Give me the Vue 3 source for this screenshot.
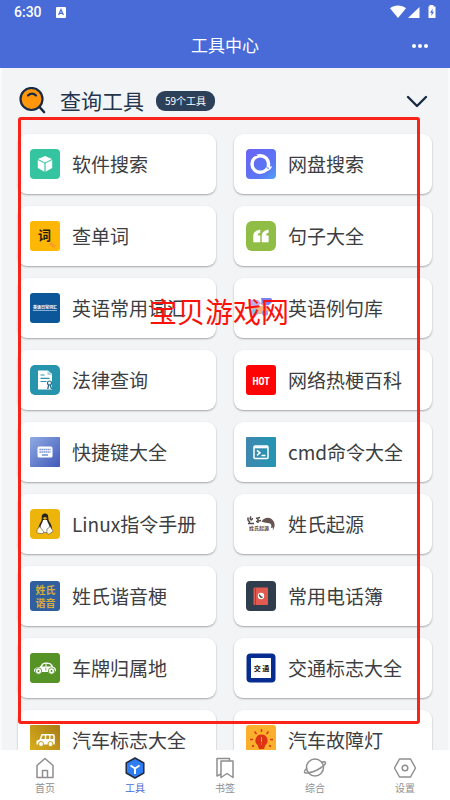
<script setup>
import { ref } from 'vue'

const open = ref(true)
const tools = [
  { id: 'box', name: '软件搜索' },
  { id: 'disk', name: '网盘搜索' },
  { id: 'word', name: '查单词' },
  { id: 'quote', name: '句子大全' },
  { id: 'vocab', name: '英语常用词汇' },
  { id: 'example', name: '英语例句库' },
  { id: 'law', name: '法律查询' },
  { id: 'hot', name: '网络热梗百科' },
  { id: 'keyboard', name: '快捷键大全' },
  { id: 'cmd', name: 'cmd命令大全' },
  { id: 'linux', name: 'Linux指令手册' },
  { id: 'origin', name: '姓氏起源' },
  { id: 'homophone', name: '姓氏谐音梗' },
  { id: 'phone', name: '常用电话簿' },
  { id: 'car', name: '车牌归属地' },
  { id: 'traffic', name: '交通标志大全' },
  { id: 'van', name: '汽车标志大全' },
  { id: 'lamp', name: '汽车故障灯' }
]
const tabs = [
  { id: 'home', name: '首页' },
  { id: 'tools', name: '工具' },
  { id: 'bookmark', name: '书签' },
  { id: 'planet', name: '综合' },
  { id: 'settings', name: '设置' }
]
</script>

<template>
  <div class="app">
    <header class="top">
      <div class="status">
        <span>6:30</span>
        <svg class="ime" width="10" height="11" viewBox="0 0 10 11">
          <rect width="10" height="11" rx="1" fill="#fff" />
          <path d="M2.6 8 5 2.6 7.4 8M3.5 6.3h3" fill="none" stroke="#486bd8" stroke-width="1.2" />
        </svg>
        <svg class="signals" width="46" height="14" viewBox="0 0 46 14" fill="#fff">
          <path d="M0 3.2C4.500-.3 11.500-.3 16 3.200L8 13z" />
          <path d="M29.500 2v11H18z" />
          <path d="M39.500 0h4v1.500H45.500V13h-7V1.500h1z" />
          <path d="M42.800 3.500 40 7.700h1.700L41.200 11 44 6.800h-1.700z" fill="#486bd8" />
        </svg>
      </div>
      <div class="title-row">
        <h1>工具中心</h1>
        <button class="more" type="button" aria-label="更多">
          <svg width="18" height="6" viewBox="0 0 18 6" fill="#fff">
            <circle cx="3" cy="3" r="2" /><circle cx="9" cy="3" r="2" /><circle cx="15" cy="3" r="2" />
          </svg>
        </button>
      </div>
    </header>

    <div class="stage">
      <main class="content">
        <div class="section-head">
          <svg class="lens" width="28" height="28" viewBox="0 0 28 28" fill="none" stroke="#172b45" stroke-width="2.200" stroke-linecap="round">
            <circle cx="12.500" cy="12" r="11" fill="#ff960b" />
            <path d="M9 8.500c2.300-2.600 5.700-2.600 8 0" />
            <path d="m20.500 20 4.500 5" stroke-width="2.600" />
          </svg>
          <h2>查询工具</h2>
          <span class="count">59个工具</span>
          <button class="toggle" type="button" aria-label="展开或收起" :aria-expanded="open" @click="open = !open">
            <svg width="22" height="14" viewBox="0 0 22 14" fill="none" stroke="#172b45" stroke-width="2.400" stroke-linecap="round" stroke-linejoin="round">
              <path d="m2 3 9 9 9-9" />
            </svg>
          </button>
        </div>

        <div v-if="open" class="grid">
          <a v-for="t in tools" :key="t.id" class="card" href="#">
            <svg class="icon" width="30" height="30" viewBox="0 0 30 30">
              <template v-if="t.id === 'box'">
                <rect width="30" height="30" rx="4" fill="#35c4a0" />
                <path d="m15 7 7 3-7 3.500L8 10z" fill="#fff" />
                <path d="m7.800 11 6.600 3.300v8.400l-6.600-3.700zM22.200 11l-6.600 3.300v8.400l6.600-3.700z" fill="#fff" />
              </template>
              <template v-else-if="t.id === 'disk'">
                <defs>
                  <linearGradient id="g-disk" x1="0" y1="0" x2="1" y2="1">
                    <stop offset="0" stop-color="#6a62f2" /><stop offset=".7" stop-color="#5a78f4" /><stop offset="1" stop-color="#52a6f6" />
                  </linearGradient>
                </defs>
                <rect width="30" height="30" rx="4" fill="url(#g-disk)" />
                <circle cx="14.300" cy="15" r="8.300" fill="none" stroke="#fff" stroke-width="3.400" />
                <path d="M22.500 14c.2 3 1 3.800 3.500 3.300-1 3.700-3.600 5-6.500 4.200z" fill="#fff" />
                <path d="M5.500 8.500c2-2 3.600-2.400 5.800-2" fill="none" stroke="#6668f3" stroke-width="1.200" />
                <path d="M20 17.300c.6 1.300 1.600 2 3 2" fill="none" stroke="#5a7cf4" stroke-width="1" />
              </template>
              <template v-else-if="t.id === 'word'">
                <rect width="30" height="30" rx="3" fill="#fdb704" />
                <path d="m20 22 5 4" stroke="#f99a2c" stroke-width="3" />
                <text x="14.500" y="19" class="glyph word">词</text>
              </template>
              <template v-else-if="t.id === 'quote'">
                <rect width="30" height="30" rx="6" fill="#8fbd45" />
                <path d="M14 9v2.500c-2 .5-2.500 1.500-2.400 3.200H14V21H7.600v-6C7.600 11.500 10 9.500 14 9zM22.300 9v2.500c-2 .5-2.500 1.500-2.400 3.200h2.400V21H16v-6c0-3.500 2.300-5.500 6.300-6z" fill="#fff" stroke="#fff" stroke-width=".6" stroke-linejoin="round" />
              </template>
              <template v-else-if="t.id === 'vocab'">
                <rect width="30" height="30" rx="3" fill="#0c5799" />
                <text x="15" y="16" class="glyph tiny">英语日常词汇</text>
                <path d="M3 17.500h24" stroke="#a9c6df" stroke-width=".8" />
              </template>
              <template v-else-if="t.id === 'example'">
                <path d="M4 7h8l3 3-3 3H6L3 10z" fill="#b9b1ef" />
                <path d="M15 5h10l2 3-4 4h-7z" fill="#7d7ff0" />
                <path d="M5 13h15l5 4-6 4H8z" fill="#f6b27d" />
                <circle cx="9" cy="19" r="3.500" fill="#83c2ec" />
                <circle cx="19" cy="20" r="3" fill="#9d91ee" />
                <path d="m15 10 7 5" stroke="#ee7da8" stroke-width="2" />
              </template>
              <template v-else-if="t.id === 'law'">
                <rect width="30" height="30" rx="5" fill="#2794ad" />
                <path d="M8 5.500h10L22 9v15.500H8z" fill="#fff" />
                <path d="M17.500 5.500V10H22" fill="#a7d4df" />
                <path d="M10.500 10h4M10.500 13.300h9M10.500 16.500h6" stroke="#2794ad" stroke-width="1.200" />
                <circle cx="19.500" cy="18" r="2" fill="#fff" stroke="#2a6d8c" stroke-width="1.200" />
                <path d="m18.700 20-1 4M20.300 20l1.200 4" stroke="#2a6d8c" stroke-width="1.300" />
              </template>
              <template v-else-if="t.id === 'hot'">
                <rect width="30" height="30" rx="3" fill="#fe0303" />
                <text x="15" y="20" class="glyph hot">HOT</text>
              </template>
              <template v-else-if="t.id === 'keyboard'">
                <defs>
                  <linearGradient id="g-key" x1="0" y1="0" x2="1" y2="1">
                    <stop offset="0" stop-color="#8fabe4" /><stop offset="1" stop-color="#4059b9" />
                  </linearGradient>
                </defs>
                <rect width="30" height="30" rx="1" fill="url(#g-key)" />
                <rect x="7.500" y="9.500" width="15" height="11" rx="1.500" fill="#fff" />
                <path d="M9.500 12.500h11M9.500 15h11" stroke="#5f7ecb" stroke-width="1.300" stroke-dasharray="1.300 .7" />
                <path d="M12 18h6" stroke="#5f7ecb" stroke-width="1.300" />
              </template>
              <template v-else-if="t.id === 'cmd'">
                <defs>
                  <linearGradient id="g-cmd" x1="0" y1="0" x2="1" y2="0">
                    <stop offset="0" stop-color="#4087af" /><stop offset="1" stop-color="#2296b1" />
                  </linearGradient>
                </defs>
                <rect width="30" height="30" rx="1" fill="url(#g-cmd)" />
                <rect x="8" y="9" width="14" height="12.500" rx="1" fill="none" stroke="#fff" stroke-width="1.500" />
                <path d="M8 10.300h14" stroke="#fff" stroke-width="2" />
                <path d="m11 13.300 3 2.500-3 2.500M15.500 18.500h4" fill="none" stroke="#fff" stroke-width="1.500" />
              </template>
              <template v-else-if="t.id === 'linux'">
                <rect width="30" height="30" rx="4" fill="#edb50b" />
                <path d="M15 4.500c-2.500 0-3.500 1.800-3.300 4.300.2 2.800-.6 3.600-1.900 6-1 1.900-1.300 3.500-1.500 5.500L13 24h5l4-4c0-2.500-.9-4.500-2-6.200-1.300-2-1.700-3-1.700-5.300 0-2.500-1-4-3.300-4z" fill="#262420" />
                <path d="M13 11h4c.3 2.500 3 5 2.800 9l-2.300 3.500h-5L10.200 19c.2-3.500 2.600-5 2.800-8z" fill="#fff" />
                <path d="m12.500 9 2.500-1 2.300 1-2.300 2z" fill="#eda91a" />
                <path d="M9.700 17.500 14 23c-.5 2-3 2-6.700.9-.8-.4-.3-1.700 0-3.500zM20.500 17.500 17 20c-.5 5 .5 5.500 2.500 4.800l3.500-2.300c.8-.8-.3-1.300-1-2z" fill="#fffbe8" stroke="#302d24" stroke-width=".5" />
              </template>
              <template v-else-if="t.id === 'origin'">
                <path d="M2 8.500v2.500l2 2.500M5 7.500c-2 3 1 5 1.500 1.500M2 14.500h6M10 9.500l4-1M10 12.500l5-1M12 9v5" stroke="#55494a" stroke-width="1.500" fill="none" />
                <path d="M15.500 12.500C19 7 25.500 8 28 13c1.300 3.300.4 6-1.300 8.500l.3-3-2.200.6c1-2.200.7-3.600-.8-4.600-2.700-.8-5.800-.5-8.500-2z" fill="#655453" />
                <text x="13" y="21" class="glyph seal">姓氏起源</text>
              </template>
              <template v-else-if="t.id === 'homophone'">
                <rect width="30" height="30" rx="3" fill="#305f9f" />
                <text x="15.500" y="13" class="glyph gold">姓氏</text>
                <text x="15.500" y="25.500" class="glyph gold">谐音</text>
              </template>
              <template v-else-if="t.id === 'phone'">
                <rect width="30" height="30" rx="4" fill="#303d4c" />
                <rect x="7.500" y="6.500" width="14.500" height="17.500" rx="1" fill="#e05a50" />
                <path d="M9.500 6.500V24" stroke="#9f4245" stroke-width="1" />
                <circle cx="15" cy="15" r="3.200" fill="#fff" />
                <path d="M13.600 13.500c0 1.500 1.200 2.900 2.900 2.900" fill="none" stroke="#333" stroke-width="1.200" />
              </template>
              <template v-else-if="t.id === 'car'">
                <rect width="30" height="30" rx="3" fill="#569326" />
                <path d="M4 17.500c0-2 3-3.500 6-3.700C11.500 11 13 9.500 16 9.500c4 0 5.500.8 7.500 4.500 2 .4 2.500 1.500 2.500 4l-1.500 1h-19C4.500 19 4 18.500 4 17.500z" fill="#fff" />
                <path d="M12 13.500c1-2 2-2.700 3.500-2.700v2.700zM16.500 10.800c2.500 0 4 .7 5 2.700h-5z" fill="#569326" />
                <path d="M15.800 14.500v3" stroke="#569326" stroke-width=".7" />
                <g fill="#fff" stroke="#569326" stroke-width=".8"><circle cx="8.500" cy="18" r="3.200" /><circle cx="21.500" cy="18" r="3.200" /></g>
                <g fill="#569326"><circle cx="8.500" cy="18" r="1" /><circle cx="21.500" cy="18" r="1" /></g>
              </template>
              <template v-else-if="t.id === 'traffic'">
                <rect x=".5" y=".5" width="29" height="29" rx="4" fill="#062c91" />
                <rect x="5" y="5" width="20" height="20" fill="#fff" />
                <text x="15.500" y="18" class="glyph road">交 通</text>
              </template>
              <template v-else-if="t.id === 'van'">
                <defs>
                  <linearGradient id="g-van" x1="0" y1="1" x2="1" y2="0">
                    <stop offset="0" stop-color="#ddb31d" /><stop offset="1" stop-color="#a77b16" />
                  </linearGradient>
                </defs>
                <rect width="30" height="30" rx="1" fill="url(#g-van)" />
                <path d="M6.500 19.500v-3.800l3-1.300L11.500 9H23c1.500 0 1.800 1 1.800 2.500v8z" fill="#fff" />
                <path d="m11.200 14 1.400-3.500h2.200V14zM16.200 10.500h3V14h-3zM20.500 10.500h2.800V14h-2.800z" fill="#c09822" />
                <g fill="#fff" stroke="#c6a020"><circle cx="11" cy="19" r="2.500" /><circle cx="20.500" cy="19" r="2.500" /></g>
              </template>
              <template v-else>
                <rect width="30" height="30" rx="3" fill="#fab02c" />
                <path d="M15.500 9.500a6 6 0 0 0-3.800 10.700L13 24h5l1.300-3.800A6 6 0 0 0 15.500 9.500z" fill="#df3413" />
                <path d="M15.500 4v3M8.500 6.500l2 2.500M22.500 6.500l-2 2.500M4 14.500h3M24 14.500h3M6 21.500l2-1M25 21.500l-2-1" stroke="#df3413" stroke-width="1.500" />
                <path d="M15.500 12v5M15.500 18.500v1" stroke="#fab02c" stroke-width="1" />
              </template>
            </svg>
            <span>{{ t.name }}</span>
          </a>
        </div>
      </main>
      <div class="frame"></div>
      <p class="mark">宝贝游戏网</p>
    </div>

    <nav class="tabs">
      <a v-for="t in tabs" :key="t.id" href="#" class="tab" :class="{ active: t.id === 'tools' }">
        <svg width="24" height="22" viewBox="0 0 24 22" fill="none" stroke="#8f8f8f" stroke-width="1.500" stroke-linejoin="round">
          <template v-if="t.id === 'home'">
            <path d="M4 8.500 12 1.500l8 7V20.500H4zM9.500 20.500v-7h5v7" />
          </template>
          <template v-else-if="t.id === 'tools'">
            <path d="m12 1 8.800 5v10L12 21l-8.800-5V6z" fill="#2f7df4" stroke="#222c3b" />
            <path d="m7.500 8.500 4.500 3 4.500-3M12 11.500V17" stroke="#fff" stroke-width="2" />
          </template>
          <template v-else-if="t.id === 'bookmark'">
            <path d="M8 4h12v16.500l-6-4-6 4z" />
            <path d="M8 17 4 19V1.500h12.500V4" />
          </template>
          <template v-else-if="t.id === 'planet'">
            <circle cx="12" cy="10.500" r="8.500" />
            <path d="M4 11c-3.500 3.500-3.500 5.500.5 5 4-.4 9-2.500 13-5 5-3.200 6.500-6 3.500-6.200-.8 0-1.700.1-2.500.4" />
          </template>
          <template v-else>
            <path d="M6.500 2h11l5 9-5 9h-11l-5-9z" />
            <circle cx="12" cy="11" r="2.800" />
          </template>
        </svg>
        <span>{{ t.name }}</span>
      </a>
    </nav>
  </div>
</template>

<style>
body {
  margin: 0;
}
</style>

<style scoped>
.app {
  height: 100vh;
  display: flex;
  flex-direction: column;
  background: #f3f4f6;
  color: #3c3e42;
  font-family: "Noto Sans CJK SC", sans-serif;
}
.top {
  background: #486bd8;
  color: #fff;
}
.status {
  display: flex;
  align-items: center;
  height: 24px;
  padding: 0 14px;
  font: 500 14px/24px Roboto, sans-serif;
}
.ime {
  margin-left: 14px;
}
.signals {
  margin-left: auto;
}
.title-row {
  display: grid;
  grid-template-columns: 1fr auto 1fr;
  align-items: center;
  height: 44px;
  padding: 0 21px;
}
h1 {
  grid-column: 2;
  margin: 0;
  padding-bottom: 2px;
  font-size: 17px;
  line-height: 24px;
  font-weight: 400;
}
button {
  display: flex;
  padding: 0;
  border: 0;
  background: none;
}
.more {
  justify-self: end;
}
.stage {
  position: relative;
  flex: 1;
  min-height: 0;
  border: solid #f9fafb;
  border-width: 0 2px;
}
.content {
  height: 100%;
  overflow-y: auto;
  scrollbar-width: none;
}
.section-head {
  display: flex;
  align-items: center;
  height: 66px;
  padding: 0 20px 0 17px;
  color: #24344d;
}
h2 {
  margin: 0 12px 0 13px;
  padding-bottom: 2px;
  font-size: 21px;
  line-height: 28px;
  font-weight: 400;
}
.count {
  padding: 0 9px;
  border-radius: 9px;
  background: #2c405a;
  color: #fff;
  font-size: 10px;
  line-height: 20px;
}
.toggle {
  margin-left: auto;
}
.grid {
  display: grid;
  grid-template-columns: 1fr 1fr;
  gap: 12px 18px;
  padding: 0 16px 12px;
}
.card {
  display: flex;
  align-items: center;
  gap: 12px;
  height: 60px;
  box-sizing: border-box;
  padding-left: 12px;
  border-radius: 9px;
  background: #fff;
  box-shadow: 0 1px 2px rgba(0, 0, 0, 0.32);
  color: inherit;
  font-size: 19px;
  line-height: 28px;
  white-space: nowrap;
  text-decoration: none;
}
.icon {
  flex: none;
}
.glyph {
  text-anchor: middle;
  font-weight: 700;
}
.word {
  font-size: 13px;
  fill: #211c10;
}
.hot {
  font-family: "Roboto Condensed", "Liberation Sans Narrow", Roboto, sans-serif;
  font-size: 10px;
  fill: #fff;
}
.tiny {
  font-size: 4px;
  fill: #fff;
}
.seal {
  font-size: 5px;
  fill: #5a4b4b;
}
.gold {
  font-size: 10px;
  fill: #d7ac3b;
}
.road {
  font-size: 7px;
  fill: #111;
}
.frame {
  position: absolute;
  inset: 49px 28px 26px 16px;
  border: 3px solid #f9231a;
  border-radius: 3px;
  pointer-events: none;
}
.mark {
  position: absolute;
  top: 223px;
  left: 147px;
  margin: 0;
  color: #f9130c;
  font-size: 28px;
  line-height: 40px;
  pointer-events: none;
}
.tabs {
  display: grid;
  grid-template-columns: repeat(5, 1fr);
  height: 50px;
  background: #fff;
}
.tab {
  display: flex;
  flex-direction: column;
  align-items: center;
  gap: 2px;
  padding-top: 7px;
  color: #8f8f8f;
  font-size: 10px;
  line-height: 14px;
  text-decoration: none;
}
.active {
  color: #486bd8;
}
</style>
